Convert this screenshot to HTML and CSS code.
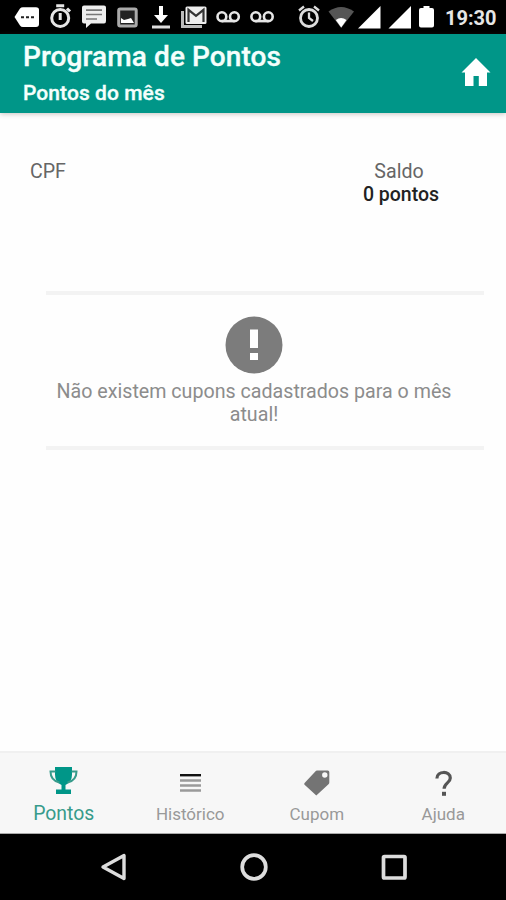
FILE: index.html
```html
<!DOCTYPE html>
<html lang="pt-BR">
<head>
<meta charset="utf-8">
<title>Programa de Pontos</title>
<link rel="stylesheet" href="styles.css">
</head>
<body>
<div class="screen">
  <div class="status">
    <div class="notifications">
      <svg viewBox="0 0 34 34"><path fill="#fff" d="M4.500 17 10 8.500Q11 7.200 13 7.200H26Q29 7.200 29 10V24Q29 27 26 27H13Q11 27 10 25.500Z"/><path stroke="#222" stroke-width="2" stroke-dasharray="3 2" d="M11 17.200h14"/></svg>
      <svg viewBox="0 0 34 34"><g fill="none" stroke="#e6e6e6" stroke-width="3"><circle cx="16.200" cy="18" r="8.500"/><path d="M12.200 5.800h8M16.200 13v7M23 8.500l3 3"/></g></svg>
      <svg viewBox="0 0 34 34"><path fill="#eee" d="M7 5.500H27Q29 5.500 29 7.500V21Q29 23.500 27 23.500H14L9 28V23.500H7Q5 23.500 5 21.500V7.500Q5 5.500 7 5.500Z"/><path stroke="#777" stroke-width="1.700" d="M9 10.200h16M9 14.500h16M9 19h11"/></svg>
      <svg viewBox="0 0 34 34"><rect x="7.700" y="9" width="17.500" height="17" rx="1.500" fill="#222" stroke="#aaa" stroke-width="3"/><path fill="#fff" d="m10 23 0-5 3 2 4-1 3-1 3 5Z"/></svg>
      <svg viewBox="0 0 34 34"><path fill="#fff" d="M15 6h4v9h5l-7 8-7-8h5Z"/><path fill="#ddd" d="M8 25.500h18v3H8Z"/></svg>
      <svg viewBox="0 0 34 34"><path fill="none" stroke="#bbb" stroke-width="3" d="M4.500 11v15.500H24"/><rect x="7.500" y="6.500" width="21" height="17.500" rx="1.500" fill="#eee"/><path fill="none" stroke="#333" stroke-width="2.200" d="M10.500 22V9.800l7.500 6L25.500 9.800V22"/></svg>
      <svg viewBox="0 0 34 34"><g fill="none" stroke="#e6e6e6" stroke-width="2.600"><circle cx="9.900" cy="16.700" r="4.400"/><circle cx="22.400" cy="16.700" r="4.400"/><path d="M9.900 21.100h12.500"/></g></svg>
      <svg viewBox="0 0 34 34"><g fill="none" stroke="#e6e6e6" stroke-width="2.600"><circle cx="10.800" cy="16.700" r="4.400"/><circle cx="23.300" cy="16.700" r="4.400"/><path d="M10.800 21.100h12.500"/></g></svg>
    </div>
    <div class="system">
      <svg class="wide" viewBox="0 0 34 34"><g fill="none" stroke="#ddd" stroke-width="2.800"><circle cx="17" cy="18" r="8.500"/><path stroke-width="2.300" d="m7 10.500 5-4M27 10.500l-5-4M17 12.500V18l4 3"/></g></svg>
      <svg class="wide" viewBox="0 0 34 34"><path fill="#555" d="M3.500 11.500Q16 2.500 29 11.500L16.200 28Z"/><path fill="#fff" d="M10.800 20Q16 16 21.500 20L16.200 27.500Z"/></svg>
      <svg class="signal" viewBox="0 0 30 34"><path fill="#fff" d="M3 28.500 25.500 6V28.500Z"/></svg>
      <svg class="signal" viewBox="0 0 30 34"><path fill="#fff" d="M3.500 28.500 26 6V28.500Z"/></svg>
      <svg class="battery" viewBox="0 0 24 34"><path fill="#fff" d="M8.500 6h6v2H17q2 0 2 2v15.500q0 2-2 2H6q-2 0-2-2V10q0-2 2-2h2.500Z"/></svg>
      <time class="clock">19:30</time>
    </div>
  </div>

  <header class="header">
    <div>
      <h1>Programa de Pontos</h1>
      <h2>Pontos do mês</h2>
    </div>
    <svg class="home" viewBox="0 0 30 30"><path fill="#fff" d="M15 1 29.500 15.500H26V29H17.800V19H12.500V29H4V15.500H.5Z"/></svg>
  </header>

  <main class="content">
    <section class="summary">
      <div class="cpf">CPF</div>
      <div class="balance">Saldo<strong>0 pontos</strong></div>
    </section>
    <section class="empty">
      <svg class="alert" viewBox="0 0 58 58"><circle cx="29" cy="29" r="28.500" fill="#7c7c7c"/><path fill="#fff" d="M25 13.500h8v18.500h-8ZM25 37h8v7h-8Z"/></svg>
      <p>Não existem cupons cadastrados para o mês atual!</p>
    </section>
  </main>

  <nav class="tabs">
    <div class="tab active">
      <svg viewBox="0 0 30 30"><path fill="#009688" d="M7 1h17v7.500q0 8-6.500 10.500v4.500H23V28H8V23.500h5.500V19Q7 16.500 7 8.500Z"/><path fill="none" stroke="#379b8b" stroke-width="2" d="M7.500 5.500H2.500q0 9 9 11M23.500 5.500h5q0 9-9 11"/></svg>
      <span>Pontos</span>
    </div>
    <div class="tab">
      <svg viewBox="0 0 30 30"><path stroke="#111" stroke-width="2.400" d="M5 9.200h21"/><path stroke="#9a9a9a" stroke-width="2.400" d="M5 14.500h21M5 19.500h21M5 24.500h21"/></svg>
      <span>Histórico</span>
    </div>
    <div class="tab">
      <svg viewBox="0 0 30 30"><path fill="#747474" fill-rule="evenodd" transform="translate(.8 -.5)" d="M15 5h11q1.500 0 1.500 1.500V17q0 1-.8 1.700L14.500 30 2.500 19Q2.200 18 3 17.200L14 5.600Q14.400 5 15 5ZM23 6.800a2.700 2.700 0 1 0 0 5.400 2.700 2.700 0 1 0 0-5.400Z"/></svg>
      <span>Cupom</span>
    </div>
    <div class="tab">
      <svg viewBox="0 0 30 30"><path fill="none" stroke="#555" stroke-width="3.200" d="M8.900 12.500C8.900 4.500 22.300 4.600 22.300 12c0 5-6.200 4.800-6.200 10.800"/><path fill="#555" d="M14 25.800h4v4h-4Z"/></svg>
      <span>Ajuda</span>
    </div>
  </nav>

  <div class="navigation">
    <svg viewBox="0 0 32 32"><path fill="none" stroke="#ddd" stroke-width="3.400" stroke-linejoin="round" d="M5 16 26 4.500V27.500Z"/></svg>
    <svg viewBox="0 0 32 32"><circle cx="16" cy="16" r="11.800" fill="none" stroke="#ddd" stroke-width="3.700"/></svg>
    <svg viewBox="0 0 32 32"><rect x="5.500" y="5.500" width="21.500" height="21.500" rx="1" fill="none" stroke="#ddd" stroke-width="3.700"/></svg>
  </div>
</div>
</body>
</html>
```
FILE: styles.css
```css
* { box-sizing: border-box; }

body {
  margin: 0;
  background: #fefefe;
  font-family: Roboto, "Liberation Sans", sans-serif;
}

svg { display: block; flex: none; overflow: visible; }

.screen {
  width: 506px;
  height: 900px;
  display: flex;
  flex-direction: column;
}

.status {
  height: 34px;
  padding-left: 10px;
  display: flex;
  justify-content: space-between;
  background: #000;
}

.notifications {
  display: grid;
  grid-template-columns: repeat(8, 33.6px);
}

.notifications svg { width: 34px; height: 34px; }

.system {
  width: 214px;
  display: flex;
}

.wide { width: 34px; height: 34px; margin-right: -1px; }
.signal { width: 30px; height: 34px; }
.wide + .signal { margin-left: -3px; }
.battery { width: 24px; height: 34px; }

.clock {
  margin-left: 6px;
  color: #e6e6e6;
  font-size: 20px;
  font-weight: 700;
  line-height: 37px;
}

.header {
  height: 79px;
  padding: 7px 15px 0 23px;
  display: flex;
  justify-content: space-between;
  background: #009688;
  color: #f4fffc;
  box-shadow: 0 1px 5px rgba(70, 60, 50, 0.3);
}

h1, h2 { margin: 0; }

h1 {
  font-size: 28px;
  line-height: 32px;
  font-weight: 500;
  letter-spacing: 0.1px;
  -webkit-text-stroke: 0.35px;
}

h2 {
  margin-top: 8px;
  font-size: 21px;
  line-height: 25px;
  font-weight: 500;
  letter-spacing: 0.07px;
  -webkit-text-stroke: 0.35px;
}

.home { width: 30px; height: 30px; margin-top: 16px; }

.content { flex: 1; }

.summary {
  height: 178px;
  padding: 47px 2px 0 30px;
  display: flex;
  justify-content: space-between;
  color: #666;
  font-size: 19.6px;
  line-height: 23px;
}

.balance { width: 210px; text-align: center; }
.balance strong { display: block; padding-left: 4px; color: #222; font-size: 19.5px; font-weight: 500; }

.empty {
  height: 159px;
  margin: 0 22px 0 46px;
  padding-top: 21px;
  border: solid #f3f3f3;
  border-width: 4px 0;
}

.alert { width: 58px; height: 58px; margin-left: 178.5px; }

.empty p {
  width: 416px;
  margin: 6px 0 0;
  color: #8c8c8c;
  font-size: 19.65px;
  line-height: 23px;
  text-align: center;
}

.tabs {
  height: 83px;
  padding-bottom: 1px;
  display: grid;
  grid-template-columns: repeat(4, 1fr);
  background: #f7f7f7;
  border-top: 2px solid #f0f0f0;
  border-bottom: 1px solid #aaa;
}

.tab {
  padding-top: 13px;
  display: flex;
  flex-direction: column;
  align-items: center;
  color: #999;
  font-size: 17px;
  line-height: 20px;
}

.tab svg { width: 30px; height: 30px; }
.tab span { margin: 8px 0 0 1px; }
.active { color: #379b8b; font-size: 19.4px; }

.navigation {
  height: 66px;
  padding: 0 96px 0 98px;
  display: flex;
  align-items: center;
  justify-content: space-between;
  background: #000;
}

.navigation svg { width: 32px; height: 32px; }
```
